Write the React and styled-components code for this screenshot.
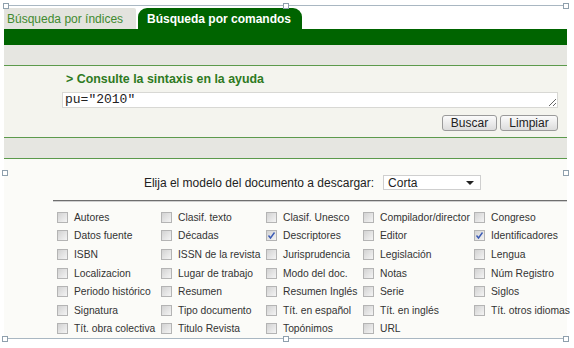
import React from 'react';
import styled, { createGlobalStyle } from 'styled-components';

const GlobalStyle = createGlobalStyle`
    body {
        margin: 0;
        background: #ffffff;
        font-family: 'Liberation Sans', Arial, sans-serif;
    }
`;

const Page = styled.div`
    position: relative;
    width: 574px;
    height: 348px;
    overflow: hidden;
`;

const Frame = styled.div`
    margin-left: 4px;
    width: 563px;
    padding-top: 8px;
`;

const Tabs = styled.div`
    display: flex;
    height: 21px;
    align-items: stretch;
`;
const Tab = styled.div`
    display: flex;
    align-items: center;
    padding: 0 ${(p) => (p.$active ? '9px' : '3px')};
    margin-right: ${(p) => (p.$active ? '0' : '2px')};
    width: ${(p) => p.$w}px;
    box-sizing: border-box;
    background: ${(p) => (p.$active ? '#006400' : '#e3e3de')};
    color: ${(p) => (p.$active ? '#ffffff' : '#3f8a2f')};
    font-weight: ${(p) => (p.$active ? 'bold' : 'normal')};
    font-size: 12px;
    border-radius: ${(p) => (p.$active ? '9px 9px 0 0' : '0 2px 0 0')};
    white-space: nowrap;
`;

const GreenBar = styled.div`
    height: 16px;
    background: #006400;
`;
const GreyStrip = styled.div`
    background: #e6e6e1;
    border-bottom: 1px solid #5c9a4c;
    border-top: ${(p) => (p.$top ? '1px solid #5c9a4c' : 'none')};
    box-sizing: border-box;
    height: ${(p) => (p.$top ? '22px' : '21px')};
`;

const QueryPanel = styled.div`
    background: #f4f4ee;
    height: 71px;
    padding: 6px 9px 0 58px;
    box-sizing: border-box;
    display: flex;
    flex-direction: column;
`;
const Heading = styled.div`
    color: #2e7a22;
    font-weight: bold;
    font-size: 12.4px;
    height: 14px;
    line-height: 14px;
    margin-left: 4px;
`;
const QueryBox = styled.textarea`
    margin-top: 6px;
    height: 16px;
    width: 496px;
    box-sizing: border-box;
    border: 1px solid #d8d8d4;
    background: #ffffff;
    font-family: 'Liberation Mono', 'Courier New', monospace;
    font-size: 13px;
    line-height: 14px;
    padding: 0 2px;
    color: #222;
    resize: vertical;
    overflow: hidden;
    outline: none;
`;
const Actions = styled.div`
    display: flex;
    justify-content: flex-end;
    gap: 3px;
    margin-top: 7px;
`;
const Button = styled.button`
    height: 16px;
    width: ${(p) => p.$w}px;
    padding: 0;
    border: 1px solid #9a9a9a;
    border-radius: 3px;
    background: linear-gradient(#fbfbfb, #dcdcdc);
    font-family: 'Liberation Sans', Arial, sans-serif;
    font-size: 12px;
    color: #222;
    line-height: 14px;
`;

const Download = styled.div`
    background: #fbfbf8;
    padding-top: 16px;
    height: 180px;
    box-sizing: border-box;
`;
const ModelRow = styled.div`
    display: flex;
    align-items: center;
    justify-content: center;
    gap: 9px;
    padding-left: 54px;
    font-size: 12px;
    color: #222;
`;
const Select = styled.div`
    width: 98px;
    height: 15px;
    box-sizing: border-box;
    background: #fff;
    border: 1px solid #cfcfcf;
    display: flex;
    align-items: center;
    justify-content: space-between;
    padding: 0 6px 0 4px;
    font-size: 12px;
`;
const Caret = styled.span`
    width: 0;
    height: 0;
    border-left: 4px solid transparent;
    border-right: 4px solid transparent;
    border-top: 4px solid #222;
`;
const Rule = styled.div`
    margin: 10px 0 0 49px;
    border-top: 1px solid #6e6e6e;
    border-bottom: 1px solid #cfcfcf;
`;
const FieldGrid = styled.div`
    display: grid;
    grid-template-columns: 104px 105px 97px 111px auto;
    grid-auto-rows: 18.6px;
    padding: 6px 0 0 53px;
`;
const Field = styled.label`
    display: flex;
    align-items: center;
    gap: 6px;
    font-size: 10.3px;
    color: #333;
    white-space: nowrap;
`;
const Box = styled.span`
    width: 11px;
    height: 11px;
    box-sizing: border-box;
    border: 1px solid #b4b4b4;
    background: linear-gradient(135deg, #d2d2d2, #f4f4f4);
    display: flex;
    align-items: center;
    justify-content: center;
    flex: none;
`;

const Overlay = styled.div`
    position: absolute;
    pointer-events: none;
    background: #a9b7c2;
`;
const Handle = styled.div`
    position: absolute;
    width: 4px;
    height: 4px;
    border: 1px solid #8fa0ad;
    background: #fff;
`;

const fields = [
    ['Autores', 'Clasif. texto', 'Clasif. Unesco', 'Compilador/director', 'Congreso'],
    ['Datos fuente', 'Décadas', 'Descriptores', 'Editor', 'Identificadores'],
    ['ISBN', 'ISSN de la revista', 'Jurisprudencia', 'Legislación', 'Lengua'],
    ['Localizacion', 'Lugar de trabajo', 'Modo del doc.', 'Notas', 'Núm Registro'],
    ['Periodo histórico', 'Resumen', 'Resumen Inglés', 'Serie', 'Siglos'],
    ['Signatura', 'Tipo documento', 'Tít. en español', 'Tít. en inglés', 'Tít. otros idiomas'],
    ['Tít. obra colectiva', 'Titulo Revista', 'Topónimos', 'URL'],
];
const checked = ['Descriptores', 'Identificadores'];

function Check() {
    return (
        <svg width="9" height="9" viewBox="0 0 9 9">
            <path d="M1.5 4.5 L3.5 7 L7.5 1.5" fill="none" stroke="#3b5bb5" strokeWidth="1.4" />
        </svg>
    );
}

export default function App() {
    return (
        <Page>
            <GlobalStyle />
            <Frame>
                <Tabs>
                    <Tab $w={132}>Búsqueda por índices</Tab>
                    <Tab $w={164} $active>Búsqueda por comandos</Tab>
                </Tabs>
                <GreenBar />
                <GreyStrip />
                <QueryPanel>
                    <Heading>&gt; Consulte la sintaxis en la ayuda</Heading>
                    <QueryBox defaultValue='pu="2010"' rows={1} />
                    <Actions>
                        <Button $w={55}>Buscar</Button>
                        <Button $w={58}>Limpiar</Button>
                    </Actions>
                </QueryPanel>
                <GreyStrip $top />
                <Download>
                    <ModelRow>
                        <span>Elija el modelo del documento a descargar:</span>
                        <Select>
                            <span>Corta</span>
                            <Caret />
                        </Select>
                    </ModelRow>
                    <Rule />
                    <FieldGrid>
                        {fields.flat().map((name) => (
                            <Field key={name}>
                                <Box>{checked.includes(name) && <Check />}</Box>
                                {name}
                            </Field>
                        ))}
                    </FieldGrid>
                </Download>
            </Frame>
            <Overlay style={{ left: 4, top: 5, width: 562, height: 1 }} />
            <Overlay style={{ left: 4, top: 338, width: 562, height: 1 }} />
            <Handle style={{ left: 3, top: 3 }} />
            <Handle style={{ left: 283, top: 3 }} />
            <Handle style={{ left: 563, top: 3 }} />
            <Handle style={{ left: 2, top: 170 }} />
            <Handle style={{ left: 563, top: 170 }} />
            <Handle style={{ left: 2, top: 336 }} />
            <Handle style={{ left: 283, top: 336 }} />
            <Handle style={{ left: 563, top: 336 }} />
        </Page>
    );
}
